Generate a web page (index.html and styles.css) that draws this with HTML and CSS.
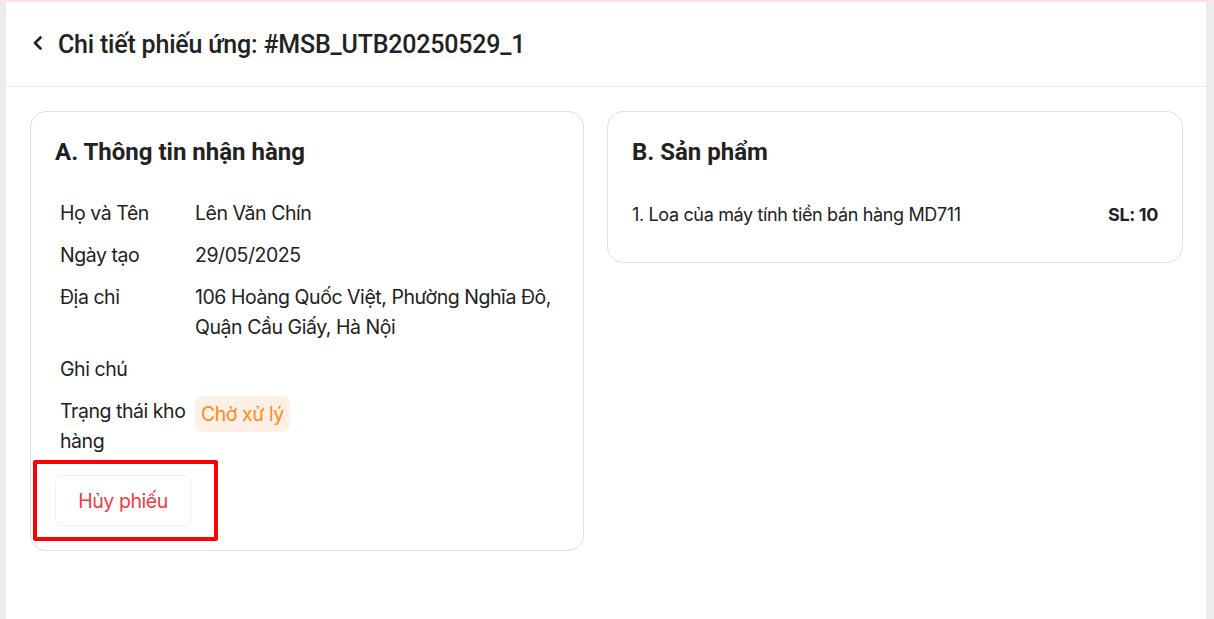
FILE: index.html
```html
<!DOCTYPE html>
<html lang="vi">
<head>
    <meta charset="UTF-8">
    <meta name="viewport" content="width=device-width, initial-scale=1.0">
    <title>Chi tiết phiếu ứng</title>
    <link rel="stylesheet" href="styles.css">
</head>
<body>

<div class="page">
    <header class="page-header">
        <a class="back" href="#" aria-label="Quay lại">
            <svg width="12" height="14" viewBox="0 0 12 14">
                <path d="M8.5 1.5 L3 7 L8.5 12.5" fill="none" stroke="#222" stroke-width="2.6" stroke-linecap="round" stroke-linejoin="round"/>
            </svg>
        </a>
        <h1>Chi tiết phiếu ứng: #MSB_UTB20250529_1</h1>
    </header>

    <div class="content">
        <section class="card card-info">
            <h2>A. Thông tin nhận hàng</h2>

            <table class="info-table">
                <tr>
                    <td class="label">Họ và Tên</td>
                    <td>Lên Văn Chín</td>
                </tr>
                <tr>
                    <td class="label">Ngày tạo</td>
                    <td>29/05/2025</td>
                </tr>
                <tr>
                    <td class="label">Địa chỉ</td>
                    <td>106 Hoàng Quốc Việt, Phường Nghĩa Đô, Quận Cầu Giấy, Hà Nội</td>
                </tr>
                <tr>
                    <td class="label">Ghi chú</td>
                    <td></td>
                </tr>
                <tr>
                    <td class="label">Trạng thái kho hàng</td>
                    <td><span class="badge">Chờ xử lý</span></td>
                </tr>
            </table>

            <div class="actions">
                <button type="button" class="btn-cancel">Hủy phiếu</button>
                <span class="highlight"></span>
            </div>
        </section>

        <section class="card card-products">
            <h2>B. Sản phẩm</h2>

            <div class="product-row">
                <span>1. Loa của máy tính tiền bán hàng MD711</span>
                <span class="qty">SL: 10</span>
            </div>
        </section>
    </div>
</div>

</body>
</html>
```

FILE: styles.css
```css
body {
    margin: 0;
    padding: 0 8px 0 6px;
    background-color: #ececec;
    border-top: 2px solid #fde2e8;
    font-family: "Inter", "Roboto", sans-serif;
    color: #222;
    height: 617px;
    overflow: hidden;
}

.page {
    background-color: #fff;
    height: 100%;
}

.page-header {
    display: flex;
    align-items: center;
    gap: 14px;
    height: 85px;
    padding: 0 26px;
    border-bottom: 1px solid #ebebeb;
    box-sizing: border-box;
}

.back {
    display: flex;
    align-items: center;
    margin-top: -2px;
}

.page-header h1 {
    margin: 0;
    font-family: "Roboto", sans-serif;
    font-size: 25px;
    font-weight: 500;
    letter-spacing: -0.2px;
    color: #222;
}

.content {
    display: flex;
    align-items: flex-start;
    gap: 23px;
    padding: 24px 23px 0 24px;
}

.card {
    border: 1px solid #e0e0e0;
    border-radius: 16px;
    box-sizing: border-box;
    padding: 24px;
}

.card h2 {
    margin: 0;
    font-family: "Roboto", sans-serif;
    font-size: 24px;
    font-weight: 700;
    line-height: 32px;
    color: #222;
}

.card-info {
    width: 554px;
    height: 440px;
    position: relative;
}

.card-products {
    flex: 1;
    height: 152px;
}

.info-table {
    margin-top: 24px;
    border-collapse: collapse;
    font-size: 19.5px;
    line-height: 30px;
    letter-spacing: -0.45px;
}

.info-table td {
    padding: 6px;
    vertical-align: top;
}

.info-table .label {
    width: 128px;
    padding-left: 5px;
    padding-right: 1px;
}

.badge {
    display: inline-block;
    padding: 3px 6px;
    border-radius: 8px;
    background-color: #fff0e5;
    color: #ff8a1e;
    line-height: 30px;
}

.actions {
    position: relative;
    margin-top: 13px;
}

.btn-cancel {
    width: 136px;
    height: 51px;
    background-color: #fff;
    border: 1px solid #f0f0f0;
    border-radius: 6px;
    color: #f23a46;
    font-family: "Inter", sans-serif;
    font-size: 19.5px;
    letter-spacing: -0.45px;
    cursor: pointer;
}

/* red frame drawn round the cancel button */
.highlight {
    position: absolute;
    left: -22px;
    top: -15px;
    width: 185px;
    height: 81px;
    border: 4px solid #ff0000;
    border-radius: 2px;
    box-sizing: border-box;
    pointer-events: none;
}

.product-row {
    display: flex;
    justify-content: space-between;
    margin-top: 32px;
    font-size: 18px;
    letter-spacing: -0.35px;
    line-height: 30px;
}

.qty {
    font-weight: 700;
}
```
